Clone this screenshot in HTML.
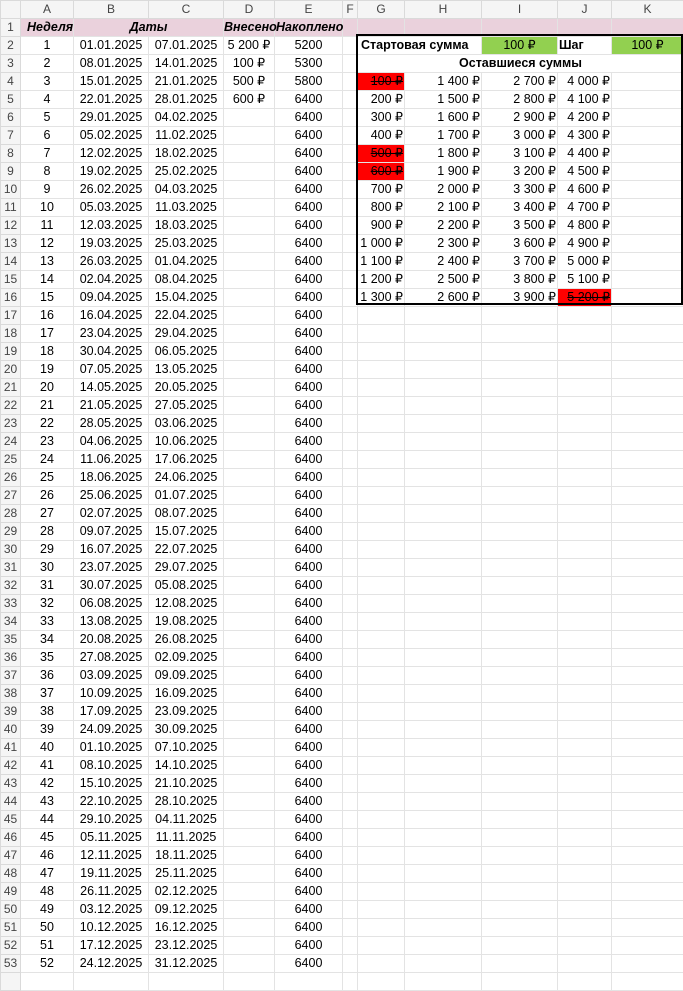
<!DOCTYPE html>
<html><head><meta charset="utf-8">
<style>
html,body{margin:0;padding:0;background:#fff;width:683px;height:974px;overflow:hidden}
table{border-collapse:collapse;table-layout:fixed;width:683px;font-family:"Liberation Sans",Arial,sans-serif;font-size:12.5px;color:#000;position:absolute;left:0;top:0}
td{border:1px solid #e3e3e3;height:17px;padding:0 1px;line-height:17px;white-space:nowrap;overflow:hidden;box-sizing:border-box}
tr{height:18px}
tr.h{height:17px}
tr.h td{background:#f5f5f5;color:#444;text-align:center;height:17px;border-color:#dadada;font-size:12px}
td.r{background:#f5f5f5;color:#444;text-align:center;font-size:12px;padding:0;border-color:#dadada}
tr.p td{background:#ead1dc;font-weight:bold;font-style:italic;overflow:visible}
.c{text-align:center}
.rt{text-align:right}
.red{background:#ff0000;text-decoration:line-through}
.gr{background:#92d050;text-align:center}
.b{font-weight:bold}
#box{position:absolute;left:356px;top:34px;width:327px;height:271px;border:2px solid #000;box-sizing:border-box;pointer-events:none}
</style></head><body>
<table>
<colgroup><col style="width:20px"><col style="width:53px"><col style="width:75px"><col style="width:75px"><col style="width:51px"><col style="width:68px"><col style="width:15px"><col style="width:47px"><col style="width:77px"><col style="width:76px"><col style="width:54px"><col style="width:72px"></colgroup>
<tr class="h"><td></td><td>A</td><td>B</td><td>C</td><td>D</td><td>E</td><td>F</td><td>G</td><td>H</td><td>I</td><td>J</td><td>K</td></tr>
<tr class="p"><td class="r" style="font-weight:normal;font-style:normal;background:#f5f5f5">1</td><td style="padding-left:6px">Неделя</td><td colspan="2" class="c">Даты</td><td class="c" style="padding:0">Внесено</td><td style="padding:0 0 0 1px">Накоплено</td><td></td><td></td><td></td><td></td><td></td><td></td></tr>
<tr><td class="r">2</td><td class="c">1</td><td class="c">01.01.2025</td><td class="c">07.01.2025</td><td class="c" style="padding:0">5 200 ₽</td><td class="c">5200</td><td></td><td colspan="2" class="b" style="padding-left:3px">Стартовая сумма</td><td class="gr">100 ₽</td><td class="b">Шаг</td><td class="gr">100 ₽</td></tr>
<tr><td class="r">3</td><td class="c">2</td><td class="c">08.01.2025</td><td class="c">14.01.2025</td><td class="c">100 ₽</td><td class="c">5300</td><td></td><td colspan="5" class="c b">Оставшиеся суммы</td></tr>
<tr><td class="r">4</td><td class="c">3</td><td class="c">15.01.2025</td><td class="c">21.01.2025</td><td class="c">500 ₽</td><td class="c">5800</td><td></td><td class="rt red">100 ₽</td><td class="rt">1 400 ₽</td><td class="rt">2 700 ₽</td><td class="rt">4 000 ₽</td><td></td></tr>
<tr><td class="r">5</td><td class="c">4</td><td class="c">22.01.2025</td><td class="c">28.01.2025</td><td class="c">600 ₽</td><td class="c">6400</td><td></td><td class="rt">200 ₽</td><td class="rt">1 500 ₽</td><td class="rt">2 800 ₽</td><td class="rt">4 100 ₽</td><td></td></tr>
<tr><td class="r">6</td><td class="c">5</td><td class="c">29.01.2025</td><td class="c">04.02.2025</td><td></td><td class="c">6400</td><td></td><td class="rt">300 ₽</td><td class="rt">1 600 ₽</td><td class="rt">2 900 ₽</td><td class="rt">4 200 ₽</td><td></td></tr>
<tr><td class="r">7</td><td class="c">6</td><td class="c">05.02.2025</td><td class="c">11.02.2025</td><td></td><td class="c">6400</td><td></td><td class="rt">400 ₽</td><td class="rt">1 700 ₽</td><td class="rt">3 000 ₽</td><td class="rt">4 300 ₽</td><td></td></tr>
<tr><td class="r">8</td><td class="c">7</td><td class="c">12.02.2025</td><td class="c">18.02.2025</td><td></td><td class="c">6400</td><td></td><td class="rt red">500 ₽</td><td class="rt">1 800 ₽</td><td class="rt">3 100 ₽</td><td class="rt">4 400 ₽</td><td></td></tr>
<tr><td class="r">9</td><td class="c">8</td><td class="c">19.02.2025</td><td class="c">25.02.2025</td><td></td><td class="c">6400</td><td></td><td class="rt red">600 ₽</td><td class="rt">1 900 ₽</td><td class="rt">3 200 ₽</td><td class="rt">4 500 ₽</td><td></td></tr>
<tr><td class="r">10</td><td class="c">9</td><td class="c">26.02.2025</td><td class="c">04.03.2025</td><td></td><td class="c">6400</td><td></td><td class="rt">700 ₽</td><td class="rt">2 000 ₽</td><td class="rt">3 300 ₽</td><td class="rt">4 600 ₽</td><td></td></tr>
<tr><td class="r">11</td><td class="c">10</td><td class="c">05.03.2025</td><td class="c">11.03.2025</td><td></td><td class="c">6400</td><td></td><td class="rt">800 ₽</td><td class="rt">2 100 ₽</td><td class="rt">3 400 ₽</td><td class="rt">4 700 ₽</td><td></td></tr>
<tr><td class="r">12</td><td class="c">11</td><td class="c">12.03.2025</td><td class="c">18.03.2025</td><td></td><td class="c">6400</td><td></td><td class="rt">900 ₽</td><td class="rt">2 200 ₽</td><td class="rt">3 500 ₽</td><td class="rt">4 800 ₽</td><td></td></tr>
<tr><td class="r">13</td><td class="c">12</td><td class="c">19.03.2025</td><td class="c">25.03.2025</td><td></td><td class="c">6400</td><td></td><td class="rt">1 000 ₽</td><td class="rt">2 300 ₽</td><td class="rt">3 600 ₽</td><td class="rt">4 900 ₽</td><td></td></tr>
<tr><td class="r">14</td><td class="c">13</td><td class="c">26.03.2025</td><td class="c">01.04.2025</td><td></td><td class="c">6400</td><td></td><td class="rt">1 100 ₽</td><td class="rt">2 400 ₽</td><td class="rt">3 700 ₽</td><td class="rt">5 000 ₽</td><td></td></tr>
<tr><td class="r">15</td><td class="c">14</td><td class="c">02.04.2025</td><td class="c">08.04.2025</td><td></td><td class="c">6400</td><td></td><td class="rt">1 200 ₽</td><td class="rt">2 500 ₽</td><td class="rt">3 800 ₽</td><td class="rt">5 100 ₽</td><td></td></tr>
<tr><td class="r">16</td><td class="c">15</td><td class="c">09.04.2025</td><td class="c">15.04.2025</td><td></td><td class="c">6400</td><td></td><td class="rt">1 300 ₽</td><td class="rt">2 600 ₽</td><td class="rt">3 900 ₽</td><td class="rt red">5 200 ₽</td><td></td></tr>
<tr><td class="r">17</td><td class="c">16</td><td class="c">16.04.2025</td><td class="c">22.04.2025</td><td></td><td class="c">6400</td><td></td><td></td><td></td><td></td><td></td><td></td></tr>
<tr><td class="r">18</td><td class="c">17</td><td class="c">23.04.2025</td><td class="c">29.04.2025</td><td></td><td class="c">6400</td><td></td><td></td><td></td><td></td><td></td><td></td></tr>
<tr><td class="r">19</td><td class="c">18</td><td class="c">30.04.2025</td><td class="c">06.05.2025</td><td></td><td class="c">6400</td><td></td><td></td><td></td><td></td><td></td><td></td></tr>
<tr><td class="r">20</td><td class="c">19</td><td class="c">07.05.2025</td><td class="c">13.05.2025</td><td></td><td class="c">6400</td><td></td><td></td><td></td><td></td><td></td><td></td></tr>
<tr><td class="r">21</td><td class="c">20</td><td class="c">14.05.2025</td><td class="c">20.05.2025</td><td></td><td class="c">6400</td><td></td><td></td><td></td><td></td><td></td><td></td></tr>
<tr><td class="r">22</td><td class="c">21</td><td class="c">21.05.2025</td><td class="c">27.05.2025</td><td></td><td class="c">6400</td><td></td><td></td><td></td><td></td><td></td><td></td></tr>
<tr><td class="r">23</td><td class="c">22</td><td class="c">28.05.2025</td><td class="c">03.06.2025</td><td></td><td class="c">6400</td><td></td><td></td><td></td><td></td><td></td><td></td></tr>
<tr><td class="r">24</td><td class="c">23</td><td class="c">04.06.2025</td><td class="c">10.06.2025</td><td></td><td class="c">6400</td><td></td><td></td><td></td><td></td><td></td><td></td></tr>
<tr><td class="r">25</td><td class="c">24</td><td class="c">11.06.2025</td><td class="c">17.06.2025</td><td></td><td class="c">6400</td><td></td><td></td><td></td><td></td><td></td><td></td></tr>
<tr><td class="r">26</td><td class="c">25</td><td class="c">18.06.2025</td><td class="c">24.06.2025</td><td></td><td class="c">6400</td><td></td><td></td><td></td><td></td><td></td><td></td></tr>
<tr><td class="r">27</td><td class="c">26</td><td class="c">25.06.2025</td><td class="c">01.07.2025</td><td></td><td class="c">6400</td><td></td><td></td><td></td><td></td><td></td><td></td></tr>
<tr><td class="r">28</td><td class="c">27</td><td class="c">02.07.2025</td><td class="c">08.07.2025</td><td></td><td class="c">6400</td><td></td><td></td><td></td><td></td><td></td><td></td></tr>
<tr><td class="r">29</td><td class="c">28</td><td class="c">09.07.2025</td><td class="c">15.07.2025</td><td></td><td class="c">6400</td><td></td><td></td><td></td><td></td><td></td><td></td></tr>
<tr><td class="r">30</td><td class="c">29</td><td class="c">16.07.2025</td><td class="c">22.07.2025</td><td></td><td class="c">6400</td><td></td><td></td><td></td><td></td><td></td><td></td></tr>
<tr><td class="r">31</td><td class="c">30</td><td class="c">23.07.2025</td><td class="c">29.07.2025</td><td></td><td class="c">6400</td><td></td><td></td><td></td><td></td><td></td><td></td></tr>
<tr><td class="r">32</td><td class="c">31</td><td class="c">30.07.2025</td><td class="c">05.08.2025</td><td></td><td class="c">6400</td><td></td><td></td><td></td><td></td><td></td><td></td></tr>
<tr><td class="r">33</td><td class="c">32</td><td class="c">06.08.2025</td><td class="c">12.08.2025</td><td></td><td class="c">6400</td><td></td><td></td><td></td><td></td><td></td><td></td></tr>
<tr><td class="r">34</td><td class="c">33</td><td class="c">13.08.2025</td><td class="c">19.08.2025</td><td></td><td class="c">6400</td><td></td><td></td><td></td><td></td><td></td><td></td></tr>
<tr><td class="r">35</td><td class="c">34</td><td class="c">20.08.2025</td><td class="c">26.08.2025</td><td></td><td class="c">6400</td><td></td><td></td><td></td><td></td><td></td><td></td></tr>
<tr><td class="r">36</td><td class="c">35</td><td class="c">27.08.2025</td><td class="c">02.09.2025</td><td></td><td class="c">6400</td><td></td><td></td><td></td><td></td><td></td><td></td></tr>
<tr><td class="r">37</td><td class="c">36</td><td class="c">03.09.2025</td><td class="c">09.09.2025</td><td></td><td class="c">6400</td><td></td><td></td><td></td><td></td><td></td><td></td></tr>
<tr><td class="r">38</td><td class="c">37</td><td class="c">10.09.2025</td><td class="c">16.09.2025</td><td></td><td class="c">6400</td><td></td><td></td><td></td><td></td><td></td><td></td></tr>
<tr><td class="r">39</td><td class="c">38</td><td class="c">17.09.2025</td><td class="c">23.09.2025</td><td></td><td class="c">6400</td><td></td><td></td><td></td><td></td><td></td><td></td></tr>
<tr><td class="r">40</td><td class="c">39</td><td class="c">24.09.2025</td><td class="c">30.09.2025</td><td></td><td class="c">6400</td><td></td><td></td><td></td><td></td><td></td><td></td></tr>
<tr><td class="r">41</td><td class="c">40</td><td class="c">01.10.2025</td><td class="c">07.10.2025</td><td></td><td class="c">6400</td><td></td><td></td><td></td><td></td><td></td><td></td></tr>
<tr><td class="r">42</td><td class="c">41</td><td class="c">08.10.2025</td><td class="c">14.10.2025</td><td></td><td class="c">6400</td><td></td><td></td><td></td><td></td><td></td><td></td></tr>
<tr><td class="r">43</td><td class="c">42</td><td class="c">15.10.2025</td><td class="c">21.10.2025</td><td></td><td class="c">6400</td><td></td><td></td><td></td><td></td><td></td><td></td></tr>
<tr><td class="r">44</td><td class="c">43</td><td class="c">22.10.2025</td><td class="c">28.10.2025</td><td></td><td class="c">6400</td><td></td><td></td><td></td><td></td><td></td><td></td></tr>
<tr><td class="r">45</td><td class="c">44</td><td class="c">29.10.2025</td><td class="c">04.11.2025</td><td></td><td class="c">6400</td><td></td><td></td><td></td><td></td><td></td><td></td></tr>
<tr><td class="r">46</td><td class="c">45</td><td class="c">05.11.2025</td><td class="c">11.11.2025</td><td></td><td class="c">6400</td><td></td><td></td><td></td><td></td><td></td><td></td></tr>
<tr><td class="r">47</td><td class="c">46</td><td class="c">12.11.2025</td><td class="c">18.11.2025</td><td></td><td class="c">6400</td><td></td><td></td><td></td><td></td><td></td><td></td></tr>
<tr><td class="r">48</td><td class="c">47</td><td class="c">19.11.2025</td><td class="c">25.11.2025</td><td></td><td class="c">6400</td><td></td><td></td><td></td><td></td><td></td><td></td></tr>
<tr><td class="r">49</td><td class="c">48</td><td class="c">26.11.2025</td><td class="c">02.12.2025</td><td></td><td class="c">6400</td><td></td><td></td><td></td><td></td><td></td><td></td></tr>
<tr><td class="r">50</td><td class="c">49</td><td class="c">03.12.2025</td><td class="c">09.12.2025</td><td></td><td class="c">6400</td><td></td><td></td><td></td><td></td><td></td><td></td></tr>
<tr><td class="r">51</td><td class="c">50</td><td class="c">10.12.2025</td><td class="c">16.12.2025</td><td></td><td class="c">6400</td><td></td><td></td><td></td><td></td><td></td><td></td></tr>
<tr><td class="r">52</td><td class="c">51</td><td class="c">17.12.2025</td><td class="c">23.12.2025</td><td></td><td class="c">6400</td><td></td><td></td><td></td><td></td><td></td><td></td></tr>
<tr><td class="r">53</td><td class="c">52</td><td class="c">24.12.2025</td><td class="c">31.12.2025</td><td></td><td class="c">6400</td><td></td><td></td><td></td><td></td><td></td><td></td></tr>
<tr><td class="r"></td><td></td><td></td><td></td><td></td><td></td><td></td><td></td><td></td><td></td><td></td><td></td></tr>
</table>
<div id="box"></div>
</body></html>
